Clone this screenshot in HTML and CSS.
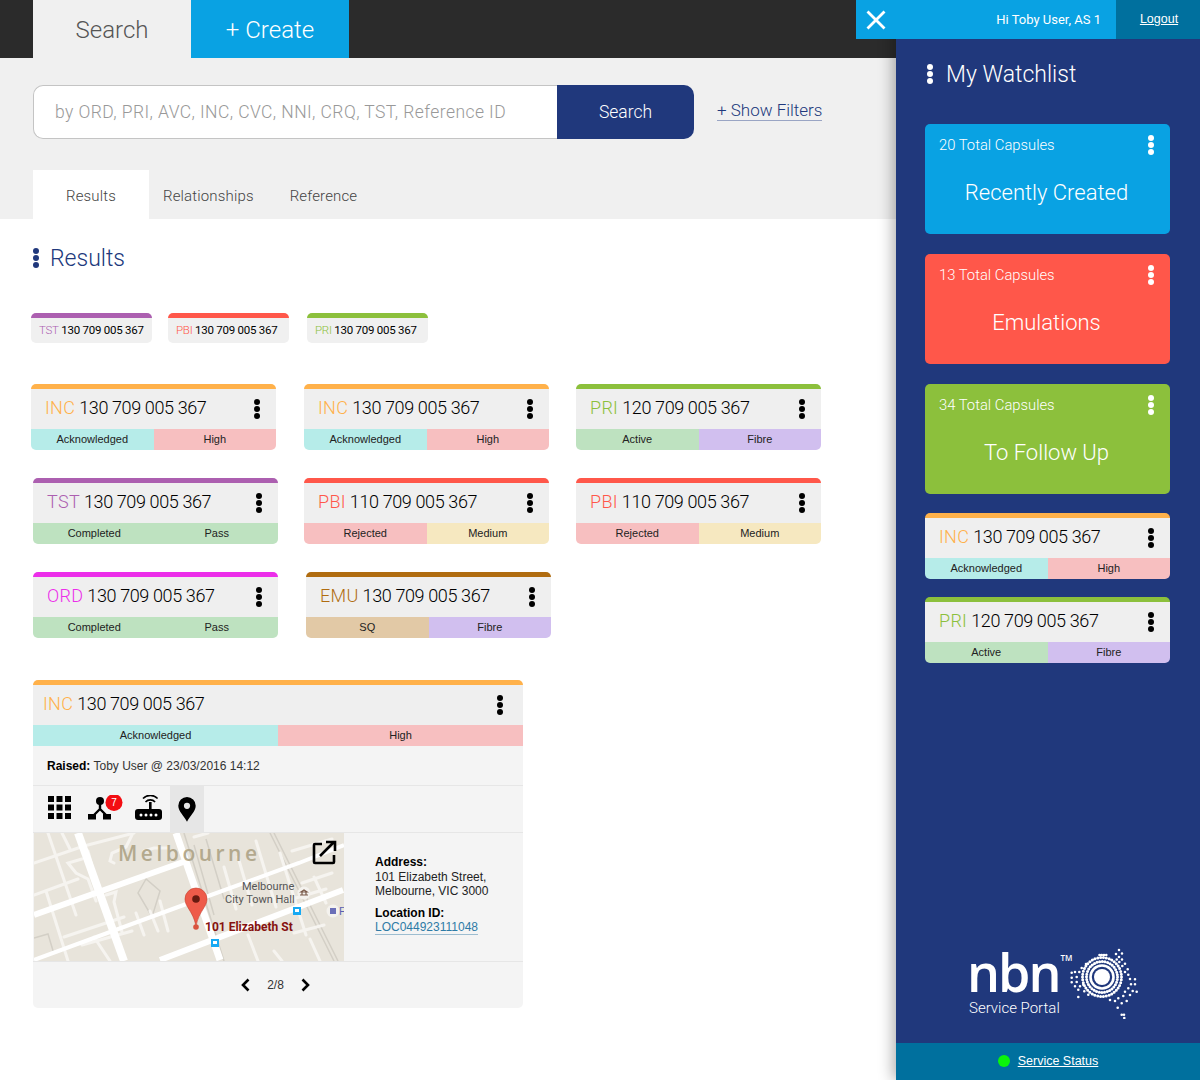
FILE: index.html
```html
<!DOCTYPE html>
<html lang="en">
<head>
    <meta charset="UTF-8">
    <title>nbn Service Portal</title>
    <link rel="stylesheet" href="styles.css">
</head>
<body>
<div class="page">
    <div class="main">
        <div class="topbar">
            <div class="toptab toptab-search">Search</div>
            <div class="toptab toptab-create">+ Create</div>
        </div>

        <div class="searcharea">
            <div class="searchrow">
                <div class="searchbox">
                    <div class="searchinput">by ORD, PRI, AVC, INC, CVC, NNI, CRQ, TST, Reference ID</div>
                    <div class="searchbtn">Search</div>
                </div>
                <a class="showfilters">+ Show Filters</a>
            </div>
            <div class="subtabs">
                <div class="subtab subtab-active">Results</div>
                <div class="subtab subtab-rel">Relationships</div>
                <div class="subtab">Reference</div>
            </div>
        </div>

        <div class="results">
            <h2 class="results-title"><span class="kebab kebab-navy"><i></i><i></i><i></i></span>Results</h2>

            <div class="chips">
                <div class="chip c-tst"><span class="code">TST</span> 130 709 005 367</div>
                <div class="chip c-pbi"><span class="code">PBI</span> 130 709 005 367</div>
                <div class="chip c-pri"><span class="code">PRI</span> 130 709 005 367</div>
            </div>

            <div class="cardrow cardrow-first">
                <div class="card c-inc">
                    <div class="card-head"><span class="card-id"><span class="code">INC</span> 130 709 005 367</span><span class="kebab"><i></i><i></i><i></i></span></div>
                    <div class="card-status"><span class="st-ack">Acknowledged</span><span class="st-high">High</span></div>
                </div>
                <div class="card c-inc">
                    <div class="card-head"><span class="card-id"><span class="code">INC</span> 130 709 005 367</span><span class="kebab"><i></i><i></i><i></i></span></div>
                    <div class="card-status"><span class="st-ack">Acknowledged</span><span class="st-high">High</span></div>
                </div>
                <div class="card c-pri">
                    <div class="card-head"><span class="card-id"><span class="code">PRI</span> 120 709 005 367</span><span class="kebab"><i></i><i></i><i></i></span></div>
                    <div class="card-status"><span class="st-done">Active</span><span class="st-fibre">Fibre</span></div>
                </div>
            </div>

            <div class="cardrow cardrow-second">
                <div class="card c-tst">
                    <div class="card-head"><span class="card-id"><span class="code">TST</span> 130 709 005 367</span><span class="kebab"><i></i><i></i><i></i></span></div>
                    <div class="card-status"><span class="st-done">Completed</span><span class="st-done">Pass</span></div>
                </div>
                <div class="card c-pbi">
                    <div class="card-head"><span class="card-id"><span class="code">PBI</span> 110 709 005 367</span><span class="kebab"><i></i><i></i><i></i></span></div>
                    <div class="card-status"><span class="st-high">Rejected</span><span class="st-med">Medium</span></div>
                </div>
                <div class="card c-pbi">
                    <div class="card-head"><span class="card-id"><span class="code">PBI</span> 110 709 005 367</span><span class="kebab"><i></i><i></i><i></i></span></div>
                    <div class="card-status"><span class="st-high">Rejected</span><span class="st-med">Medium</span></div>
                </div>
            </div>

            <div class="cardrow cardrow-third">
                <div class="card c-ord">
                    <div class="card-head"><span class="card-id"><span class="code">ORD</span> 130 709 005 367</span><span class="kebab"><i></i><i></i><i></i></span></div>
                    <div class="card-status"><span class="st-done">Completed</span><span class="st-done">Pass</span></div>
                </div>
                <div class="card c-emu">
                    <div class="card-head"><span class="card-id"><span class="code">EMU</span> 130 709 005 367</span><span class="kebab"><i></i><i></i><i></i></span></div>
                    <div class="card-status"><span class="st-sq">SQ</span><span class="st-fibre">Fibre</span></div>
                </div>
            </div>

            <div class="detail c-inc">
                <div class="card-head detail-head"><span class="card-id"><span class="code">INC</span> 130 709 005 367</span><span class="kebab"><i></i><i></i><i></i></span></div>
                <div class="card-status"><span class="st-ack">Acknowledged</span><span class="st-high">High</span></div>
                <div class="raised"><b>Raised:</b> Toby User @ 23/03/2016 14:12</div>
                <div class="itabs">
                    <div class="itab itab-grid">
                        <svg width="23" height="23" viewBox="0 0 23 23"><rect width="6" height="6"/><rect x="8.5" width="6" height="6"/><rect x="17" width="6" height="6"/><rect y="8.5" width="6" height="6"/><rect x="8.5" y="8.5" width="6" height="6"/><rect x="17" y="8.5" width="6" height="6"/><rect y="17" width="6" height="6"/><rect x="8.5" y="17" width="6" height="6"/><rect x="17" y="17" width="6" height="6"/></svg>
                    </div>
                    <div class="itab itab-net">
                        <svg width="35" height="26" viewBox="0 0 35 26"><circle cx="12" cy="6" r="4"/><path d="M12 9v6M12 14l-7 7M12 14l7 7" stroke="#000" stroke-width="2.4" fill="none"/><rect x="0" y="19" width="8" height="5.5"/><rect x="15" y="19" width="8" height="5.5"/><circle cx="26" cy="7.5" r="8.5" fill="#f30d12"/><text x="26" y="11" class="badge-num">7</text></svg>
                    </div>
                    <div class="itab itab-router">
                        <svg width="27" height="26" viewBox="0 0 27 26"><rect x="0" y="14" width="27" height="11" rx="3"/><rect x="14" y="7" width="2.6" height="8"/><circle cx="6" cy="20" r="1.5" fill="#fff"/><circle cx="11" cy="20" r="1.5" fill="#fff"/><circle cx="16" cy="20" r="1.5" fill="#fff"/><circle cx="21" cy="20" r="1.5" fill="#fff"/><path d="M10.5 7a6.5 6.5 0 0 1 9.6 0M8 3.5a10 10 0 0 1 14.6 0" stroke="#000" stroke-width="1.6" fill="none"/></svg>
                    </div>
                    <div class="itab itab-pin itab-on">
                        <svg width="18" height="25" viewBox="0 0 18 25"><path d="M9 0a8.7 8.7 0 0 0-8.7 8.7c0 5.6 5.6 10 8.7 16 3.1-6 8.7-10.4 8.7-16A8.7 8.7 0 0 0 9 0z"/><circle cx="9" cy="8.8" r="3.1" fill="#e6e6e6"/></svg>
                    </div>
                </div>
                <div class="detail-body">
                    <svg class="map" width="310" height="128" viewBox="0 0 310 128">
                        <rect width="310" height="128" fill="#e8e4db"/>
                        <g stroke="#d3cfc6" stroke-width="1.5" fill="none">
                            <path d="M0 105l14-4 6 20M112 46l-8 14 14 24 8-26zM236 0l64 128M240 0l64 128"/>
                            <path d="M150 0l40 128M160 12l20 70M172 6l18 60"/>
                        </g>
                        <g stroke="#f6f4f0" stroke-width="3" fill="none" stroke-linecap="round">
                            <path d="M0 30l50-17 50-13M14 0l28 82M28 0l8 16M0 62l44-16M12 58l22 70M48 26l-14 4 8 10 12 6 8 22"/>
                            <path d="M54 18l12 46 6 14M72 62l10-3-2 10 8 30M60 104l16 24M102 80l8 22M116 78l8 20M126 68l8 30"/>
                            <path d="M80 30l-4-2 2-8 14-6 6-12M110 18l10-3 14 0M160 4l14-4M190 34l12 42M204 24l14 48M222 8l20 66M246 20l26 82M258 18l40-12M268 50l30-10M280 44l12 26M252 68l40-12M260 100l30-8M276 106l10 22M240 118l8 10M214 102l10 26M30 104l60-20M48 112l50-14"/>
                        </g>
                        <g stroke="#fff" fill="none">
                            <path d="M0 82L152 28" stroke-width="6"/>
                            <path d="M44 0l46 128" stroke-width="8"/>
                            <path d="M142 0l44 127" stroke-width="7"/>
                            <path d="M0 127l155-57 110-40 45-18" stroke-width="4"/>
                            <path d="M126 127l183-70" stroke-width="6"/>
                        </g>
                        <text x="84" y="28" class="map-city">Melbourne</text>
                        <text x="208" y="57" class="map-label">Melbourne</text>
                        <text x="191" y="70" class="map-label">City Town Hall</text>
                        <circle cx="270" cy="60" r="6.5" fill="#f4f2ee"/>
                        <path d="M266 62h8M267 59h6l-3-2zM268 59v3M272 59v3" stroke="#7a5a4a" stroke-width="1.2" fill="none"/>
                        <rect x="259" y="74" width="8" height="8" fill="#17a9f3"/>
                        <rect x="261" y="76" width="4" height="3" fill="#fff"/>
                        <rect x="177" y="106" width="8" height="8" fill="#17a9f3"/>
                        <rect x="179" y="108" width="4" height="3" fill="#fff"/>
                        <circle cx="299" cy="78" r="6.5" fill="#f4f2ee"/>
                        <rect x="296" y="75" width="6" height="6" fill="#6b6fb8"/>
                        <text x="305" y="82" class="map-blue">F</text>
                        <path d="M162 55a11 11 0 0 0-11 11c0 8 8 12 11 27 3-15 11-19 11-27a11 11 0 0 0-11-11z" fill="#ee5b4a" stroke="#c4412f" stroke-width=".6"/>
                        <circle cx="162" cy="66" r="3.8" fill="#671a10"/>
                        <circle cx="162" cy="94" r="2.8" fill="#d9543f"/>
                        <text x="171" y="98" class="map-addr">101 Elizabeth St</text>
                        <g fill="none" stroke="#000" stroke-width="2.6">
                            <path d="M288 11h-7a1 1 0 0 0-1 1v17a1 1 0 0 0 1 1h18a1 1 0 0 0 1-1v-7"/>
                            <path d="M286 23l14-14M292 9h9v9"/>
                        </g>
                    </svg>
                    <div class="addr">
                        <div class="addr-label">Address:</div>
                        <div class="addr-text">101 Elizabeth Street,<br>Melbourne, VIC 3000</div>
                        <div class="addr-label addr-loc">Location ID:</div>
                        <a class="addr-link">LOC044923111048</a>
                    </div>
                </div>
                <div class="pager">
                    <svg width="11" height="14" viewBox="0 0 11 14"><path d="M8.5 1.5L3 7l5.5 5.5" fill="none" stroke="#000" stroke-width="2.6"/></svg>
                    <span>2/8</span>
                    <svg width="11" height="14" viewBox="0 0 11 14"><path d="M2.5 1.5L8 7l-5.5 5.5" fill="none" stroke="#000" stroke-width="2.6"/></svg>
                </div>
            </div>
        </div>
    </div>

    <div class="side">
        <div class="side-top">
            <div class="side-hi">
                <svg width="20" height="20" viewBox="0 0 20 20"><path d="M1.5 1.5l17 17M18.5 1.5l-17 17" stroke="#fff" stroke-width="2.8" fill="none"/></svg>
                <span>Hi Toby User, AS 1</span>
            </div>
            <a class="logout">Logout</a>
        </div>
        <div class="side-body">
            <h2 class="side-title"><span class="kebab kebab-white"><i></i><i></i><i></i></span>My Watchlist</h2>

            <div class="tile tile-blue">
                <div class="tile-top"><span>20 Total Capsules</span><span class="kebab kebab-white"><i></i><i></i><i></i></span></div>
                <div class="tile-name">Recently Created</div>
            </div>
            <div class="tile tile-red">
                <div class="tile-top"><span>13 Total Capsules</span><span class="kebab kebab-white"><i></i><i></i><i></i></span></div>
                <div class="tile-name">Emulations</div>
            </div>
            <div class="tile tile-green">
                <div class="tile-top"><span>34 Total Capsules</span><span class="kebab kebab-white"><i></i><i></i><i></i></span></div>
                <div class="tile-name">To Follow Up</div>
            </div>

            <div class="card side-card c-inc">
                <div class="card-head"><span class="card-id"><span class="code">INC</span> 130 709 005 367</span><span class="kebab"><i></i><i></i><i></i></span></div>
                <div class="card-status"><span class="st-ack">Acknowledged</span><span class="st-high">High</span></div>
            </div>
            <div class="card side-card c-pri">
                <div class="card-head"><span class="card-id"><span class="code">PRI</span> 120 709 005 367</span><span class="kebab"><i></i><i></i><i></i></span></div>
                <div class="card-status"><span class="st-done">Active</span><span class="st-fibre">Fibre</span></div>
            </div>

            <div class="logo">
                <div class="logo-text">
                    <div class="logo-nbn"><span>nbn</span><sup>TM</sup></div>
                    <div class="logo-sub">Service Portal</div>
                </div>
                <svg class="logo-map" width="70" height="72" viewBox="0 0 70 72">
                    <circle cx="32" cy="30" r="8" fill="#fff"/>
                    <g fill="none" stroke="#fff" stroke-linecap="round">
                        <circle cx="32" cy="30" r="11.5" stroke-width="2.6"/>
                        <circle cx="32" cy="30" r="15.5" stroke-width="3" stroke-dasharray="0 2.7"/>
                        <circle cx="32" cy="30" r="19.5" stroke-width="3" stroke-dasharray="0 2.9"/>
                        <path stroke-width="2.6" d="M29.5 8h0M31.7 8h0M34 8h0M36.3 8h0M49 3h0M46 7h0M52 6.5h0M49 10h0M46.7 12.5h0M52 12.5h0M49.3 15h0M55 16.7h0M52.3 19h0M57.7 22.3h0M55 25h0M58.3 27.7h0M60 32h0M65 32.3h0M61 37.3h0M65 37.3h0M58.3 41.3h0M62.7 44h0M66.7 44.7h0M55 44.7h0M60 48h0M53.3 49h0M48.3 51.3h0M56.7 54h0M51.7 56.3h0M45 54h0M40 53h0M47.7 60.7h0M54 67.7h0M51.7 67.7h0M54.3 71h0M16 17h0M11.7 21h0M9.3 25h0M5 25h0M1.7 25.7h0M6.7 30h0M1.7 30.7h0M6.7 35h0M1.7 35.3h0M5 39.3h0M10 39.3h0M8.3 42.7h0M13.3 37.7h0M14.3 44.3h0M8.3 50h0M18.3 47.7h0"/>
                    </g>
                </svg>
            </div>
        </div>
        <div class="side-foot"><i class="status-dot"></i><a class="status-link">Service Status</a></div>
    </div>
</div>
</body>
</html>
```

FILE: styles.css
```css
* {
    box-sizing: border-box;
}
html, body {
    margin: 0;
    padding: 0;
}
body {
    font-family: "Liberation Sans", Arial, sans-serif;
    color: #000;
    background: #fff;
}
.page {
    display: flex;
    width: 1200px;
    height: 1080px;
    overflow: hidden;
}

/* left column */
.main {
    width: 896px;
    flex-shrink: 0;
}
.topbar {
    display: flex;
    height: 58px;
    padding-left: 33px;
    background: #2b2b2b;
}
.toptab {
    width: 158px;
    padding-top: 15px;
    text-align: center;
    font-family: Roboto, sans-serif;
    font-weight: 300;
    font-size: 24px;
    line-height: 30px;
}
.toptab-search {
    background: #f0f0f0;
    color: #555;
}
.toptab-create {
    background: #09a2e3;
    color: #fff;
}
.searcharea {
    height: 161px;
    padding: 27px 0 0 33px;
    background: #f0f0f0;
}
.searchrow {
    display: flex;
    align-items: flex-start;
}
.searchbox {
    display: flex;
    width: 661px;
    height: 54px;
}
.searchinput {
    flex: 1;
    padding-left: 21px;
    background: #fff;
    border: 1px solid #c4c4c4;
    border-right: none;
    border-radius: 10px 0 0 10px;
    font-family: Roboto, sans-serif;
    font-weight: 300;
    font-size: 17.5px;
    letter-spacing: .42px;
    line-height: 52px;
    color: #999;
}
.searchbtn {
    width: 137px;
    background: #20387c;
    border-radius: 0 10px 10px 0;
    color: #fff;
    text-align: center;
    font-family: Roboto, sans-serif;
    font-weight: 300;
    font-size: 17.5px;
    line-height: 54px;
}
.showfilters {
    margin: 15px 0 0 23px;
    border-bottom: 1px solid #9aa5c4;
    color: #20387c;
    font-family: Roboto, sans-serif;
    font-weight: 300;
    font-size: 17px;
    line-height: 20px;
}
.subtabs {
    display: flex;
    height: 49px;
    margin-top: 31px;
}
.subtab {
    padding-top: 17px;
    font-family: Roboto, sans-serif;
    font-weight: 300;
    font-size: 15px;
    letter-spacing: .15px;
    line-height: 18px;
    color: #444;
}
.subtab-active {
    width: 116px;
    background: #fff;
    text-align: center;
}
.subtab-rel {
    margin: 0 36px 0 14px;
}

.results {
    padding: 25px 0 0 33px;
}
.results-title {
    display: flex;
    align-items: center;
    gap: 11px;
    margin: 0;
    height: 28px;
    font-family: Roboto, sans-serif;
    font-weight: 300;
    font-size: 23px;
    color: #20387c;
}
.kebab {
    display: inline-flex;
    flex-direction: column;
    gap: 1px;
    flex-shrink: 0;
}
.kebab i {
    width: 6px;
    height: 6px;
    border-radius: 50%;
    background: #000;
}
.kebab-navy i {
    background: #20387c;
}
.kebab-white i {
    background: #fff;
}

.code {
    font-family: Roboto, sans-serif;
    font-weight: 300;
    color: var(--tone);
}
.c-inc { --tone: #ffb14a; }
.c-tst { --tone: #ac5fb0; }
.c-pbi { --tone: #ff574a; }
.c-pri { --tone: #8cc03c; }
.c-ord { --tone: #ec2eea; }
.c-emu { --tone: #b06c10; }

.chips {
    display: flex;
    gap: 16px;
    margin: 41px 0 0 -2px;
}
.chip {
    width: 121px;
    height: 30px;
    padding-left: 8px;
    background: #f0f0f0;
    border-top: 5px solid var(--tone);
    border-radius: 5px;
    font-family: Roboto, sans-serif;
    font-size: 11.5px;
    letter-spacing: -.25px;
    line-height: 24px;
    white-space: nowrap;
}
.chip + .chip + .chip {
    margin-left: 2px;
}

.cardrow {
    display: flex;
    gap: 26px;
    margin-top: 28px;
}
.cardrow-first {
    margin: 41px 0 0 -2px;
    gap: 28px;
}
.cardrow-first .card + .card + .card {
    margin-left: -1px;
}
.cardrow-second .card + .card + .card {
    margin-left: 1px;
}
.cardrow-third {
    gap: 28px;
}
.card {
    width: 245px;
    height: 66px;
    border-top: 5px solid var(--tone);
    border-radius: 5px;
    overflow: hidden;
}
.card-head {
    display: flex;
    align-items: center;
    justify-content: space-between;
    height: 40px;
    padding: 0 16px 0 14px;
    background: #efefef;
}
.card-id {
    margin-top: -4px;
    font-family: Roboto, sans-serif;
    font-weight: 300;
    font-size: 18px;
    letter-spacing: -.38px;
    white-space: nowrap;
}
.card-id .code {
    letter-spacing: .3px;
}
.card-status {
    display: flex;
    height: 21px;
    font-size: 11px;
    line-height: 21px;
    text-align: center;
    color: #222;
}
.card-status span {
    flex: 1;
}
.st-ack { background: #b6ece9; }
.st-high { background: #f7bfc0; }
.st-done { background: #bee2c0; }
.st-fibre { background: #d1bfef; }
.st-med { background: #f6e8c0; }
.st-sq { background: #e2c9a6; }

/* expanded card */
.detail {
    width: 490px;
    height: 328px;
    margin-top: 42px;
    border-top: 5px solid var(--tone);
    border-radius: 5px;
    background: #f4f4f4;
    overflow: hidden;
}
.detail-head {
    padding: 0 20px 0 10px;
}
.raised {
    height: 40px;
    padding-left: 14px;
    border-bottom: 1px solid #e6e6e6;
    font-size: 12px;
    line-height: 40px;
    color: #333;
}
.raised b {
    color: #000;
}
.itabs {
    display: flex;
    height: 47px;
    border-bottom: 1px solid #e6e6e6;
}
.itab {
    display: flex;
    align-items: center;
    justify-content: center;
    padding-bottom: 3px;
}
.itab-grid { width: 52px; }
.itab-net { width: 41px; }
.itab-router { width: 44px; }
.itab-pin {
    width: 34px;
    padding-bottom: 0;
}
.itab-on {
    background: #e6e6e6;
}
.badge-num {
    font-size: 10px;
    fill: #fff;
    text-anchor: middle;
}
.detail-body {
    display: flex;
    height: 129px;
    padding-left: 1px;
    border-bottom: 1px solid #e6e6e6;
}
.map {
    display: block;
    flex-shrink: 0;
}
.map-city {
    font-family: "Open Sans", sans-serif;
    font-weight: 600;
    font-size: 21px;
    letter-spacing: 3.5px;
    fill: #b3a98e;
}
.map-label {
    font-family: Roboto, sans-serif;
    font-size: 11px;
    fill: #555;
}
.map-addr {
    font-family: Roboto, sans-serif;
    font-weight: 700;
    font-size: 12px;
    fill: #86120f;
}
.map-blue {
    font-family: Roboto, sans-serif;
    font-size: 11px;
    fill: #5a60b0;
}
.addr {
    padding: 22px 0 0 31px;
    font-size: 12px;
    line-height: 14px;
    color: #222;
}
.addr-label {
    font-weight: bold;
    color: #000;
}
.addr-text {
    margin-top: 1px;
}
.addr-loc {
    margin-top: 8px;
}
.addr-link {
    color: #2e7ba6;
    border-bottom: 1px solid #9dbdd0;
}
.pager {
    display: flex;
    align-items: center;
    justify-content: center;
    gap: 16px;
    height: 46px;
    padding-right: 5px;
    font-size: 12px;
    color: #333;
}

/* right column */
.side {
    position: relative;
    display: flex;
    flex-direction: column;
    width: 304px;
    flex-shrink: 0;
    background: #20387c;
    box-shadow: -3px 0 14px rgba(0, 0, 0, .32);
}
.side-top {
    position: relative;
    display: flex;
    height: 39px;
    margin-left: -40px;
}
.side-hi {
    display: flex;
    align-items: center;
    justify-content: space-between;
    flex: 1;
    padding: 0 15px 0 10px;
    background: #09a2e3;
    color: #fff;
    font-family: Roboto, sans-serif;
    font-size: 13px;
}
.logout {
    width: 84px;
    padding-left: 2px;
    background: #00709e;
    color: #fff;
    text-align: center;
    font-size: 12.5px;
    line-height: 39px;
    text-decoration: underline;
}
.side-body {
    display: flex;
    flex-direction: column;
    flex: 1;
    padding: 0 0 24px 29px;
}
.side-title {
    display: flex;
    align-items: center;
    gap: 13px;
    height: 30px;
    margin: 20px 0 35px 2px;
    font-family: Roboto, sans-serif;
    font-weight: 300;
    font-size: 23px;
    color: #fff;
}
.tile {
    width: 245px;
    height: 110px;
    flex-shrink: 0;
    margin-bottom: 20px;
    padding: 11px 16px 0 14px;
    border-radius: 5px;
    color: #fff;
}
.tile-blue { background: #09a2e3; }
.tile-red { background: #ff574a; }
.tile-green {
    background: #8cc03c;
    margin-bottom: 19px;
}
.tile-top {
    display: flex;
    align-items: flex-start;
    justify-content: space-between;
    font-family: Roboto, sans-serif;
    font-weight: 300;
    font-size: 14.8px;
    line-height: 20px;
}
.tile-name {
    margin-top: 24px;
    text-align: center;
    font-family: Roboto, sans-serif;
    font-weight: 300;
    font-size: 22px;
    line-height: 28px;
}
.side-card {
    flex-shrink: 0;
    margin-bottom: 18px;
}
.logo {
    display: flex;
    align-items: flex-start;
    margin: auto 0 0 44px;
}
.logo-text {
    width: 101px;
    padding-top: 2px;
    color: #fff;
}
.logo-nbn {
    display: flex;
    align-items: flex-start;
    height: 46px;
    margin-left: -2px;
    font-family: "Open Sans", sans-serif;
    font-weight: 600;
    font-size: 52px;
    line-height: 46px;
    letter-spacing: -2px;
}
.logo-nbn sup {
    margin: 5px 0 0 1px;
    font-size: 8px;
    line-height: 8px;
    letter-spacing: 0;
}
.logo-sub {
    margin-top: 4px;
    font-family: Roboto, sans-serif;
    font-weight: 300;
    font-size: 15px;
}
.side-foot {
    display: flex;
    align-items: center;
    justify-content: center;
    gap: 8px;
    height: 37px;
    padding-bottom: 2px;
    background: #00709e;
    font-size: 12.5px;
    color: #fff;
}
.status-dot {
    width: 12px;
    height: 12px;
    border-radius: 50%;
    background: #0bf40b;
}
.status-link {
    text-decoration: underline;
}
```
